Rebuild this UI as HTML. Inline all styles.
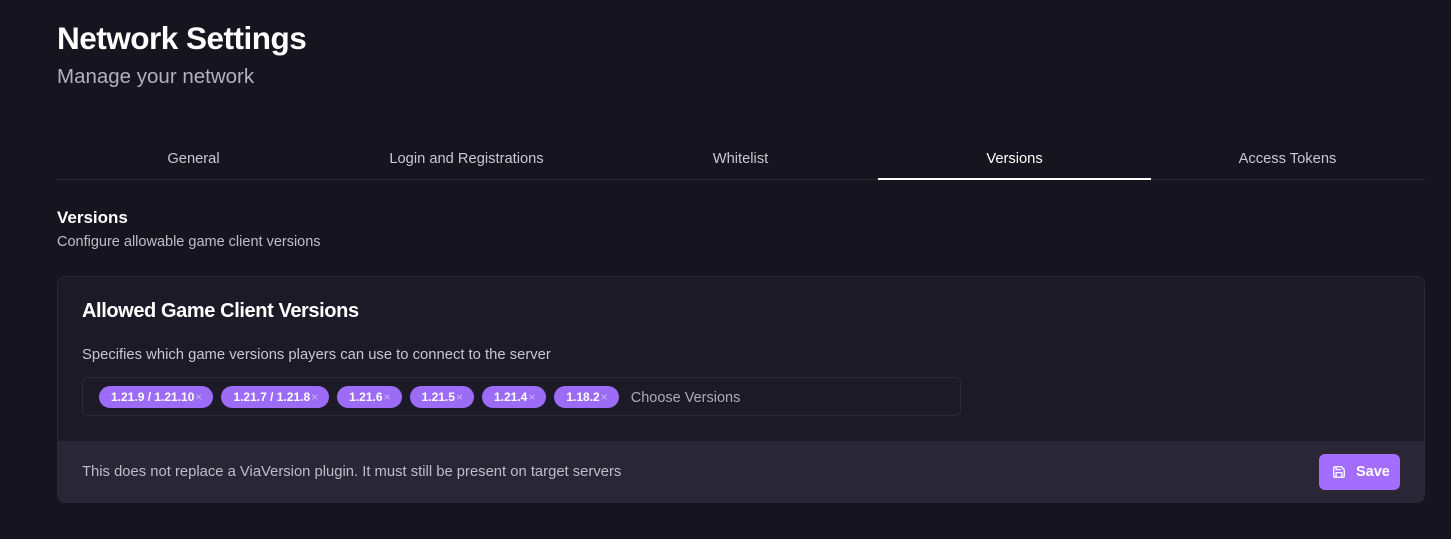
<!DOCTYPE html>
<html><head><style>
*{box-sizing:border-box;margin:0;padding:0}
body{width:1451px;height:539px;background:#16141e;font-family:"Liberation Sans",sans-serif;color:#fff;position:relative;overflow:hidden}
.a{position:absolute;white-space:nowrap}
.tab{position:absolute;top:151px;width:273px;text-align:center;font-size:14.7px;color:#c9c7d2}
.chip{display:inline-flex;align-items:center;height:22px;padding:0 11px 0 12px;border-radius:11px;background:#9d6cf7;font-size:12px;font-weight:bold;color:#fff;margin-right:8px}
.chip span{color:#c8b2f5;font-weight:normal;margin-left:1px;font-size:12px}
</style></head><body>
<div class="a" style="left:57px;top:20px;font-size:31.5px;font-weight:bold;letter-spacing:-0.5px">Network Settings</div>
<div class="a" style="left:57px;top:65px;font-size:20.5px;color:#b3b0bd">Manage your network</div>
<div class="tab" style="left:57px">General</div>
<div class="tab" style="left:330px">Login and Registrations</div>
<div class="tab" style="left:604px">Whitelist</div>
<div class="tab" style="left:878px;color:#fff">Versions</div>
<div class="tab" style="left:1151px">Access Tokens</div>
<div class="a" style="left:57px;top:179px;width:1368px;height:1px;background:#2c2a37"></div>
<div class="a" style="left:878px;top:178px;width:273px;height:2px;background:#fff"></div>
<div class="a" style="left:57px;top:208px;font-size:17px;font-weight:bold">Versions</div>
<div class="a" style="left:57px;top:234px;font-size:14.5px;color:#c0bdc9">Configure allowable game client versions</div>
<div class="a" style="left:57px;top:276px;width:1368px;height:227px;background:#1c1a27;border:1px solid #2a2836;border-radius:8px;overflow:hidden">
 <div class="a" style="left:24px;top:23px;font-size:20px;font-weight:bold;letter-spacing:-0.4px">Allowed Game Client Versions</div>
 <div class="a" style="left:24px;top:70px;font-size:14.8px;color:#c9c6d2">Specifies which game versions players can use to connect to the server</div>
 <div class="a" style="left:24px;top:100px;width:879px;height:39px;border:1px solid #2c2a37;border-radius:6px;display:flex;align-items:center;padding-left:16px">
  <div class="chip">1.21.9 / 1.21.10<span>×</span></div><div class="chip">1.21.7 / 1.21.8<span>×</span></div><div class="chip">1.21.6<span>×</span></div><div class="chip">1.21.5<span>×</span></div><div class="chip">1.21.4<span>×</span></div><div class="chip">1.18.2<span>×</span></div>
  <span style="font-size:14.5px;color:#aeabb8;margin-left:4px;margin-top:2px">Choose Versions</span>
 </div>
 <div class="a" style="left:0;top:164px;width:1368px;height:63px;background:#292736">
  <div class="a" style="left:24px;top:23px;font-size:14.8px;color:#c0bdc9">This does not replace a ViaVersion plugin. It must still be present on target servers</div>
  <div class="a" style="left:1261px;top:13px;width:81px;height:36px;background:#a36dff;border-radius:6px;display:flex;align-items:center;padding-left:13px;font-size:14.5px;font-weight:bold">
   <svg width="14" height="14" viewBox="0 0 24 24" fill="none" stroke="#fff" stroke-width="2.2" stroke-linecap="round" stroke-linejoin="round" style="margin-right:10px"><path d="M19 21H5a2 2 0 0 1-2-2V5a2 2 0 0 1 2-2h11l5 5v11a2 2 0 0 1-2 2z"/><path d="M17 21v-8H7v8"/><path d="M7 3v5h8"/></svg>Save
  </div>
 </div>
</div>
</body></html>
